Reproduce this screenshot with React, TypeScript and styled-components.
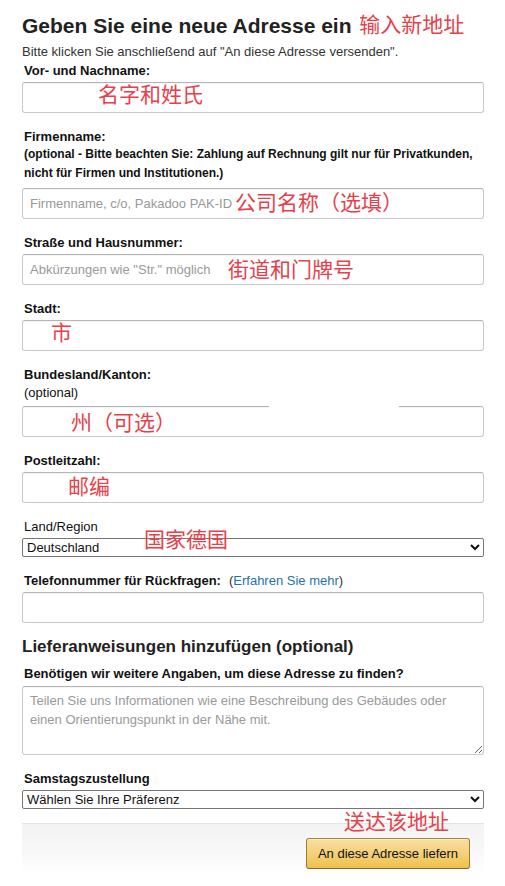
import React from "react";
import styled, { createGlobalStyle } from "styled-components";

const GlobalStyle = createGlobalStyle`
  html, body { margin: 0; padding: 0; background: #fff; }
  body { font-family: "Liberation Sans", Arial, sans-serif; color: #111; }
  * { box-sizing: border-box; }
`;

const Page = styled.div`
  width: 505px;
  padding: 13px 21px 10px 22px;
`;

const Title = styled.h1`
  margin: 0;
  font-size: 21px;
  line-height: 26px;
  font-weight: 700;
  color: #222;
`;

const SectionTitle = styled.h2`
  margin: 13px 0 0;
  font-size: 17px;
  line-height: 22px;
  font-weight: 700;
  color: #222;
`;

const Subtitle = styled.p`
  margin: 5px 0 0;
  font-size: 13px;
  line-height: 16px;
  color: #333;
`;

const Field = styled.div<{ $mt?: number }>`
  margin-top: ${(p) => (p.$mt ?? 15)}px;
`;

const LabelBlock = styled.div<{ $mb?: number }>`
  padding-left: 2px;
  margin-bottom: ${(p) => (p.$mb ?? 3)}px;
`;

const Label = styled.label<{ $weight?: number }>`
  display: block;
  font-size: 13px;
  line-height: 17px;
  font-weight: ${(p) => p.$weight ?? 700};
  color: #111;
`;

const Hint = styled.div<{ $bold?: boolean }>`
  font-size: ${(p) => (p.$bold ? 12 : 13)}px;
  line-height: 19px;
  font-weight: ${(p) => (p.$bold ? 700 : 400)};
  color: #111;
`;

const LinkPart = styled.span`
  font-weight: 400;
  margin-left: 8px;
  color: #333;
`;

const Link = styled.a`
  color: #1d72b0;
  text-decoration: none;
`;

const Wrap = styled.div`
  position: relative;
`;

const TextInput = styled.input`
  display: block;
  width: 100%;
  height: 31px;
  padding: 3px 7px;
  font-family: "Liberation Sans", Arial, sans-serif;
  font-size: 13px;
  color: #111;
  background: #fff;
  border: 1px solid #c9c9c9;
  border-top-color: #b4b4b4;
  border-radius: 3px;
  box-shadow: 0 1px 0 rgba(255, 255, 255, 0.5), inset 0 1px 0 rgba(0, 0, 0, 0.04);
  outline: none;
  &::placeholder { color: #999; }
`;

const TextArea = styled.textarea`
  display: block;
  width: 100%;
  height: 69px;
  padding: 4px 7px;
  font-family: "Liberation Sans", Arial, sans-serif;
  font-size: 13px;
  line-height: 19px;
  color: #111;
  background: #fff;
  border: 1px solid #c9c9c9;
  border-top-color: #b4b4b4;
  border-radius: 3px;
  box-shadow: inset 0 1px 0 rgba(0, 0, 0, 0.04);
  outline: none;
  &::placeholder { color: #999; }
`;

const Select = styled.select`
  display: block;
  width: 100%;
  height: 19px;
  font-family: "Liberation Sans", Arial, sans-serif;
  font-size: 13px;
  color: #111;
  background: #fff;
  border: 1px solid #767676;
  border-radius: 2px;
`;

const Annot = styled.span<{ $top: number; $left: number }>`
  position: absolute;
  top: ${(p) => p.$top}px;
  left: ${(p) => p.$left}px;
  font-family: "Noto Sans CJK SC", "Noto Sans CJK JP", sans-serif;
  font-size: 21px;
  line-height: 21px;
  font-weight: 400;
  color: #e6414a;
  white-space: nowrap;
  pointer-events: none;
`;

const InlineAnnot = styled.span`
  font-family: "Noto Sans CJK SC", "Noto Sans CJK JP", sans-serif;
  font-size: 21px;
  line-height: 21px;
  font-weight: 400;
  color: #e6414a;
  margin-left: 2px;
  vertical-align: 1px;
`;

const BorderMask = styled.span`
  position: absolute;
  top: -1px;
  left: 247px;
  width: 130px;
  height: 3px;
  background: #fff;
`;

const ActionBar = styled.div`
  position: relative;
  margin-top: 14px;
  display: flex;
  justify-content: flex-end;
  padding: 14px 14px 6px;
  border-top: 1px solid #e4e4e4;
  background: linear-gradient(to bottom, #f3f3f3 0%, #f8f8f8 55%, #ffffff 100%);
`;

const SubmitButton = styled.button`
  width: 164px;
  height: 31px;
  padding: 0;
  font-family: "Liberation Sans", Arial, sans-serif;
  font-size: 13px;
  color: #111;
  background: linear-gradient(to bottom, #f7dfa5, #f0c14b);
  border: 1px solid;
  border-color: #a88734 #9c7e31 #846a29;
  border-radius: 3px;
  box-shadow: inset 0 1px 0 rgba(255, 255, 255, 0.4);
  cursor: pointer;
`;

export default function App() {
  return (
    <>
      <GlobalStyle />
      <Page>
        <Title>
          Geben Sie eine neue Adresse ein <InlineAnnot>输入新地址</InlineAnnot>
        </Title>
        <Subtitle>Bitte klicken Sie anschließend auf "An diese Adresse versenden".</Subtitle>

        <Field $mt={2}>
          <LabelBlock>
            <Label>Vor- und Nachname:</Label>
          </LabelBlock>
          <Wrap>
            <TextInput type="text" />
            <Annot $top={1} $left={76}>名字和姓氏</Annot>
          </Wrap>
        </Field>

        <Field>
          <LabelBlock $mb={5}>
            <Label>Firmenname:</Label>
            <Hint $bold>
              (optional - Bitte beachten Sie: Zahlung auf Rechnung gilt nur für Privatkunden,
              <br />
              nicht für Firmen und Institutionen.)
            </Hint>
          </LabelBlock>
          <Wrap>
            <TextInput type="text" placeholder="Firmenname, c/o, Pakadoo PAK-ID" />
            <Annot $top={3} $left={213}>公司名称（选填）</Annot>
          </Wrap>
        </Field>

        <Field>
          <LabelBlock>
            <Label>Straße und Hausnummer:</Label>
          </LabelBlock>
          <Wrap>
            <TextInput type="text" placeholder={'Abkürzungen wie "Str." möglich'} />
            <Annot $top={4} $left={206}>街道和门牌号</Annot>
          </Wrap>
        </Field>

        <Field>
          <LabelBlock>
            <Label>Stadt:</Label>
          </LabelBlock>
          <Wrap>
            <TextInput type="text" />
            <Annot $top={1} $left={29}>市</Annot>
          </Wrap>
        </Field>

        <Field>
          <LabelBlock $mb={4}>
            <Label>Bundesland/Kanton:</Label>
            <Hint>(optional)</Hint>
          </LabelBlock>
          <Wrap>
            <TextInput type="text" />
            <BorderMask />
            <Annot $top={5} $left={49}>州（可选）</Annot>
          </Wrap>
        </Field>

        <Field>
          <LabelBlock>
            <Label>Postleitzahl:</Label>
          </LabelBlock>
          <Wrap>
            <TextInput type="text" />
            <Annot $top={3} $left={46}>邮编</Annot>
          </Wrap>
        </Field>

        <Field>
          <LabelBlock>
            <Label $weight={400}>Land/Region</Label>
          </LabelBlock>
          <Wrap>
            <Select defaultValue="DE">
              <option value="DE">Deutschland</option>
              <option value="AT">Österreich</option>
              <option value="CH">Schweiz</option>
            </Select>
            <Annot $top={-10} $left={122}>国家德国</Annot>
          </Wrap>
        </Field>

        <Field>
          <LabelBlock>
            <Label>
              Telefonnummer für Rückfragen:
              <LinkPart>
                (<Link href="#">Erfahren Sie mehr</Link>)
              </LinkPart>
            </Label>
          </LabelBlock>
          <Wrap>
            <TextInput type="tel" />
          </Wrap>
        </Field>

        <SectionTitle>Lieferanweisungen hinzufügen (optional)</SectionTitle>

        <Field $mt={7}>
          <LabelBlock $mb={4}>
            <Label>Benötigen wir weitere Angaben, um diese Adresse zu finden?</Label>
          </LabelBlock>
          <TextArea placeholder="Teilen Sie uns Informationen wie eine Beschreibung des Gebäudes oder einen Orientierungspunkt in der Nähe mit." />
        </Field>

        <Field>
          <LabelBlock>
            <Label>Samstagszustellung</Label>
          </LabelBlock>
          <Select defaultValue="">
            <option value="">Wählen Sie Ihre Präferenz</option>
            <option value="yes">Ja</option>
            <option value="no">Nein</option>
          </Select>
        </Field>

        <ActionBar>
          <Annot $top={-14} $left={322}>送达该地址</Annot>
          <SubmitButton type="button">An diese Adresse liefern</SubmitButton>
        </ActionBar>
      </Page>
    </>
  );
}
